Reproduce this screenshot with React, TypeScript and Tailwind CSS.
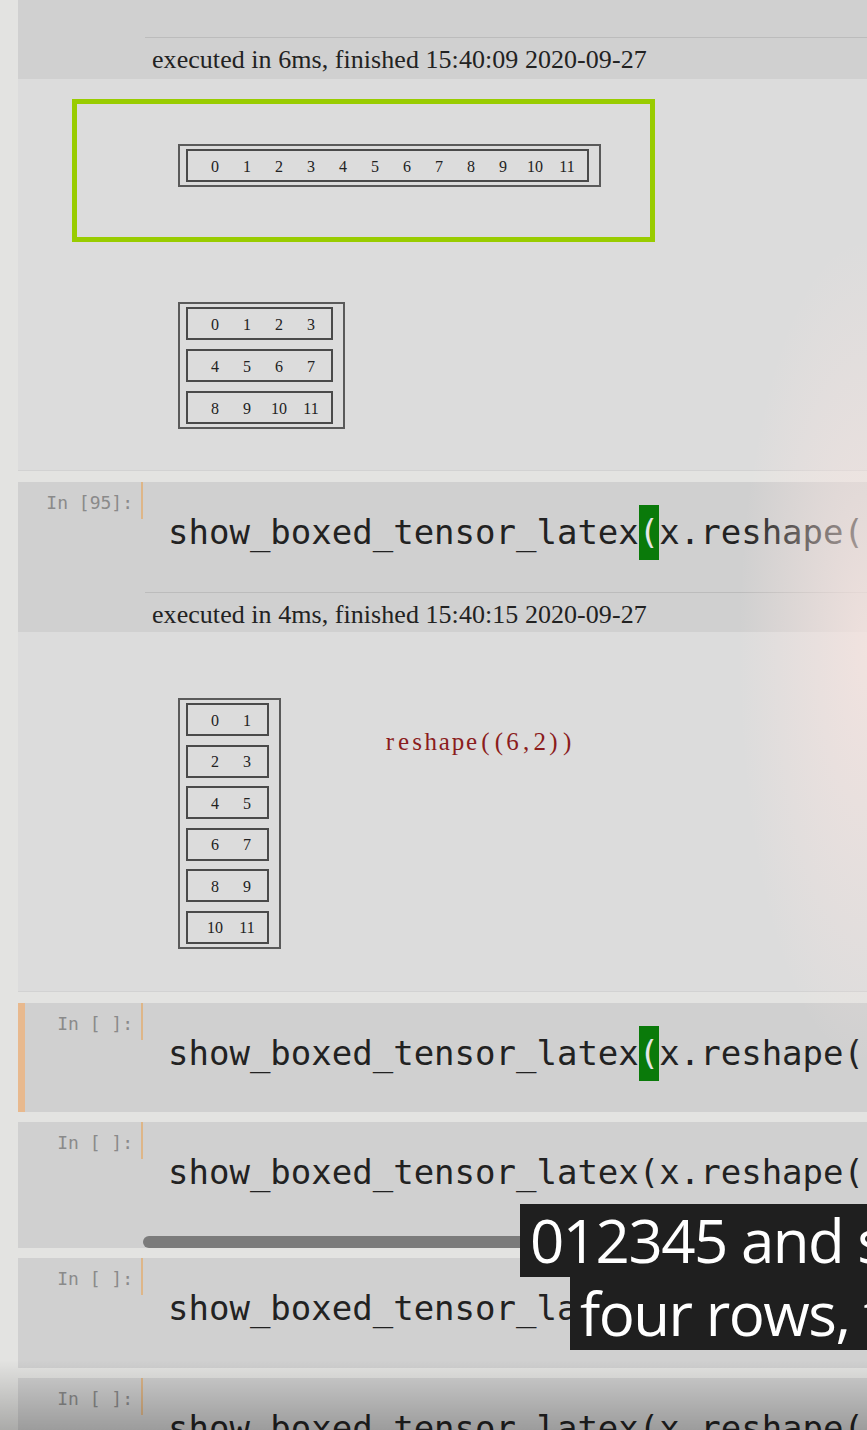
import React from "react";

const mono = { fontFamily: '"DejaVu Sans Mono", monospace' };
const serif = { fontFamily: '"Liberation Serif", serif' };

function Box({ rows, gap }: { rows: string[][]; gap: string }) {
  return (
    <div
      className={`flex w-fit flex-col border-2 border-[#5a5a5a] pt-[3px] pb-[3px] pl-[6px] pr-[10px] ${gap}`}
    >
      {rows.map((row, i) => (
        <div
          key={i}
          className="flex h-[33px] w-fit items-center border-2 border-[#4a4a4a] pl-[11px] pr-[4px] pt-[2px]"
        >
          {row.map((n) => (
            <span
              key={n}
              className="w-[32px] text-center text-[16px] leading-none text-[#222]"
              style={serif}
            >
              {n}
            </span>
          ))}
        </div>
      ))}
    </div>
  );
}

function Executed({ text, height }: { text: string; height: string }) {
  return (
    <div className={`bg-[#d0d0d0] pl-[127px] ${height}`}>
      <div
        className="h-full border-t border-[#bcbcbc] pl-[7px] pt-[9px] text-[26px] leading-[26px] tracking-[0.05px] text-[#222]"
        style={serif}
      >
        {text}
      </div>
    </div>
  );
}

function Cell({
  prompt,
  height,
  selected,
  cursor,
  scrollbar,
}: {
  prompt: string;
  height: string;
  selected?: boolean;
  cursor?: boolean;
  scrollbar?: boolean;
}) {
  return (
    <div className={`flex bg-[#d0d0d0] ${height}`}>
      <div className={`w-[7px] shrink-0 ${selected ? "bg-[#e8b98e]" : ""}`} />
      <div
        className="w-[108px] shrink-0 pt-[10px] text-right text-[18px] leading-[22px] text-[#8a8a8a]"
        style={mono}
      >
        {prompt}
      </div>
      <div className="ml-[8px] h-[37px] w-[2px] shrink-0 bg-[#deb688]" />
      <div className="flex min-w-0 flex-1 flex-col">
        <div
          className="mt-[23px] h-[55px] whitespace-nowrap pl-[25px] text-[34px] leading-[55px] text-[#222]"
          style={mono}
        >
          show_boxed_tensor_latex
          {cursor ? (
            <span className="inline-block h-[55px] bg-[#0a7a0a] text-[#e6e6e6]">(</span>
          ) : (
            "("
          )}
          x.reshape(
        </div>
        {scrollbar && (
          <div className="mt-auto h-[12px] w-[560px] rounded-full bg-[#7b7b7b]" />
        )}
      </div>
    </div>
  );
}

const redChars = "reshape((6,2))".split("");

export default function App() {
  return (
    <div className="relative h-[1430px] w-[867px] overflow-hidden bg-[#e3e3e1]">
      <div className="flex flex-col pl-[18px]">
        {/* end of previous cell */}
        <div className="h-[37px] bg-[#d0d0d0]" />
        <Executed text="executed in 6ms, finished 15:40:09 2020-09-27" height="h-[42px]" />
        <div className="h-[392px] border-b border-[#d2d2d2] bg-[#dcdcdc] pt-[20px]">
          <div className="ml-[54px] h-[143px] w-[583px] border-[5px] border-[#99cc00] pl-[101px] pt-[40px]">
            <Box
              rows={[["0", "1", "2", "3", "4", "5", "6", "7", "8", "9", "10", "11"]]}
              gap="gap-0"
            />
          </div>
          <div className="ml-[160px] mt-[60px]">
            <Box
              rows={[
                ["0", "1", "2", "3"],
                ["4", "5", "6", "7"],
                ["8", "9", "10", "11"],
              ]}
              gap="gap-[9px]"
            />
          </div>
        </div>
        <div className="h-[11px]" />

        <Cell prompt="In [95]:" height="h-[110px]" cursor />
        <Executed text="executed in 4ms, finished 15:40:15 2020-09-27" height="h-[40px]" />
        <div className="flex h-[360px] items-start border-b border-[#d2d2d2] bg-[#dcdcdc] pl-[160px] pt-[66px]">
          <Box
            rows={[
              ["0", "1"],
              ["2", "3"],
              ["4", "5"],
              ["6", "7"],
              ["8", "9"],
              ["10", "11"],
            ]}
            gap="gap-[8.6px]"
          />
          <div className="ml-[102px] mt-[30px] flex text-[25px] leading-[28px] text-[#8b1c1c]" style={serif}>
            {redChars.map((c, i) => (
              <span key={i} className="inline-block w-[13.65px] text-center">
                {c}
              </span>
            ))}
          </div>
        </div>
        <div className="h-[11px]" />

        <Cell prompt="In [ ]:" height="h-[109px]" selected cursor />
        <div className="h-[10px]" />
        <Cell prompt="In [ ]:" height="h-[126px]" scrollbar />
        <div className="h-[10px]" />
        <Cell prompt="In [ ]:" height="h-[110px]" />
        <div className="h-[10px]" />
        <Cell prompt="In [ ]:" height="h-[110px]" />
      </div>

      {/* video overlays */}
      <div className="pointer-events-none absolute right-0 top-[200px] h-[900px] w-[140px] bg-[radial-gradient(ellipse_at_right,rgba(246,228,224,0.8),transparent_65%)]" />
      <div className="pointer-events-none absolute bottom-0 left-0 h-[70px] w-full bg-gradient-to-b from-transparent to-black/25" />

      {/* subtitles */}
      <div
        className="absolute left-[520px] top-[1204px] h-[73px] w-[400px] whitespace-nowrap bg-[#1f1f1f] pl-[10px] text-[60px] leading-[73px] tracking-[-1.5px] text-white"
        style={{ fontFamily: '"Open Sans", sans-serif' }}
      >
        012345 and s
      </div>
      <div
        className="absolute left-[570px] top-[1277px] h-[73px] w-[400px] whitespace-nowrap bg-[#1f1f1f] pl-[10px] text-[60px] leading-[73px] tracking-[-1.5px] text-white"
        style={{ fontFamily: '"Open Sans", sans-serif' }}
      >
        four rows, t
      </div>
    </div>
  );
}
